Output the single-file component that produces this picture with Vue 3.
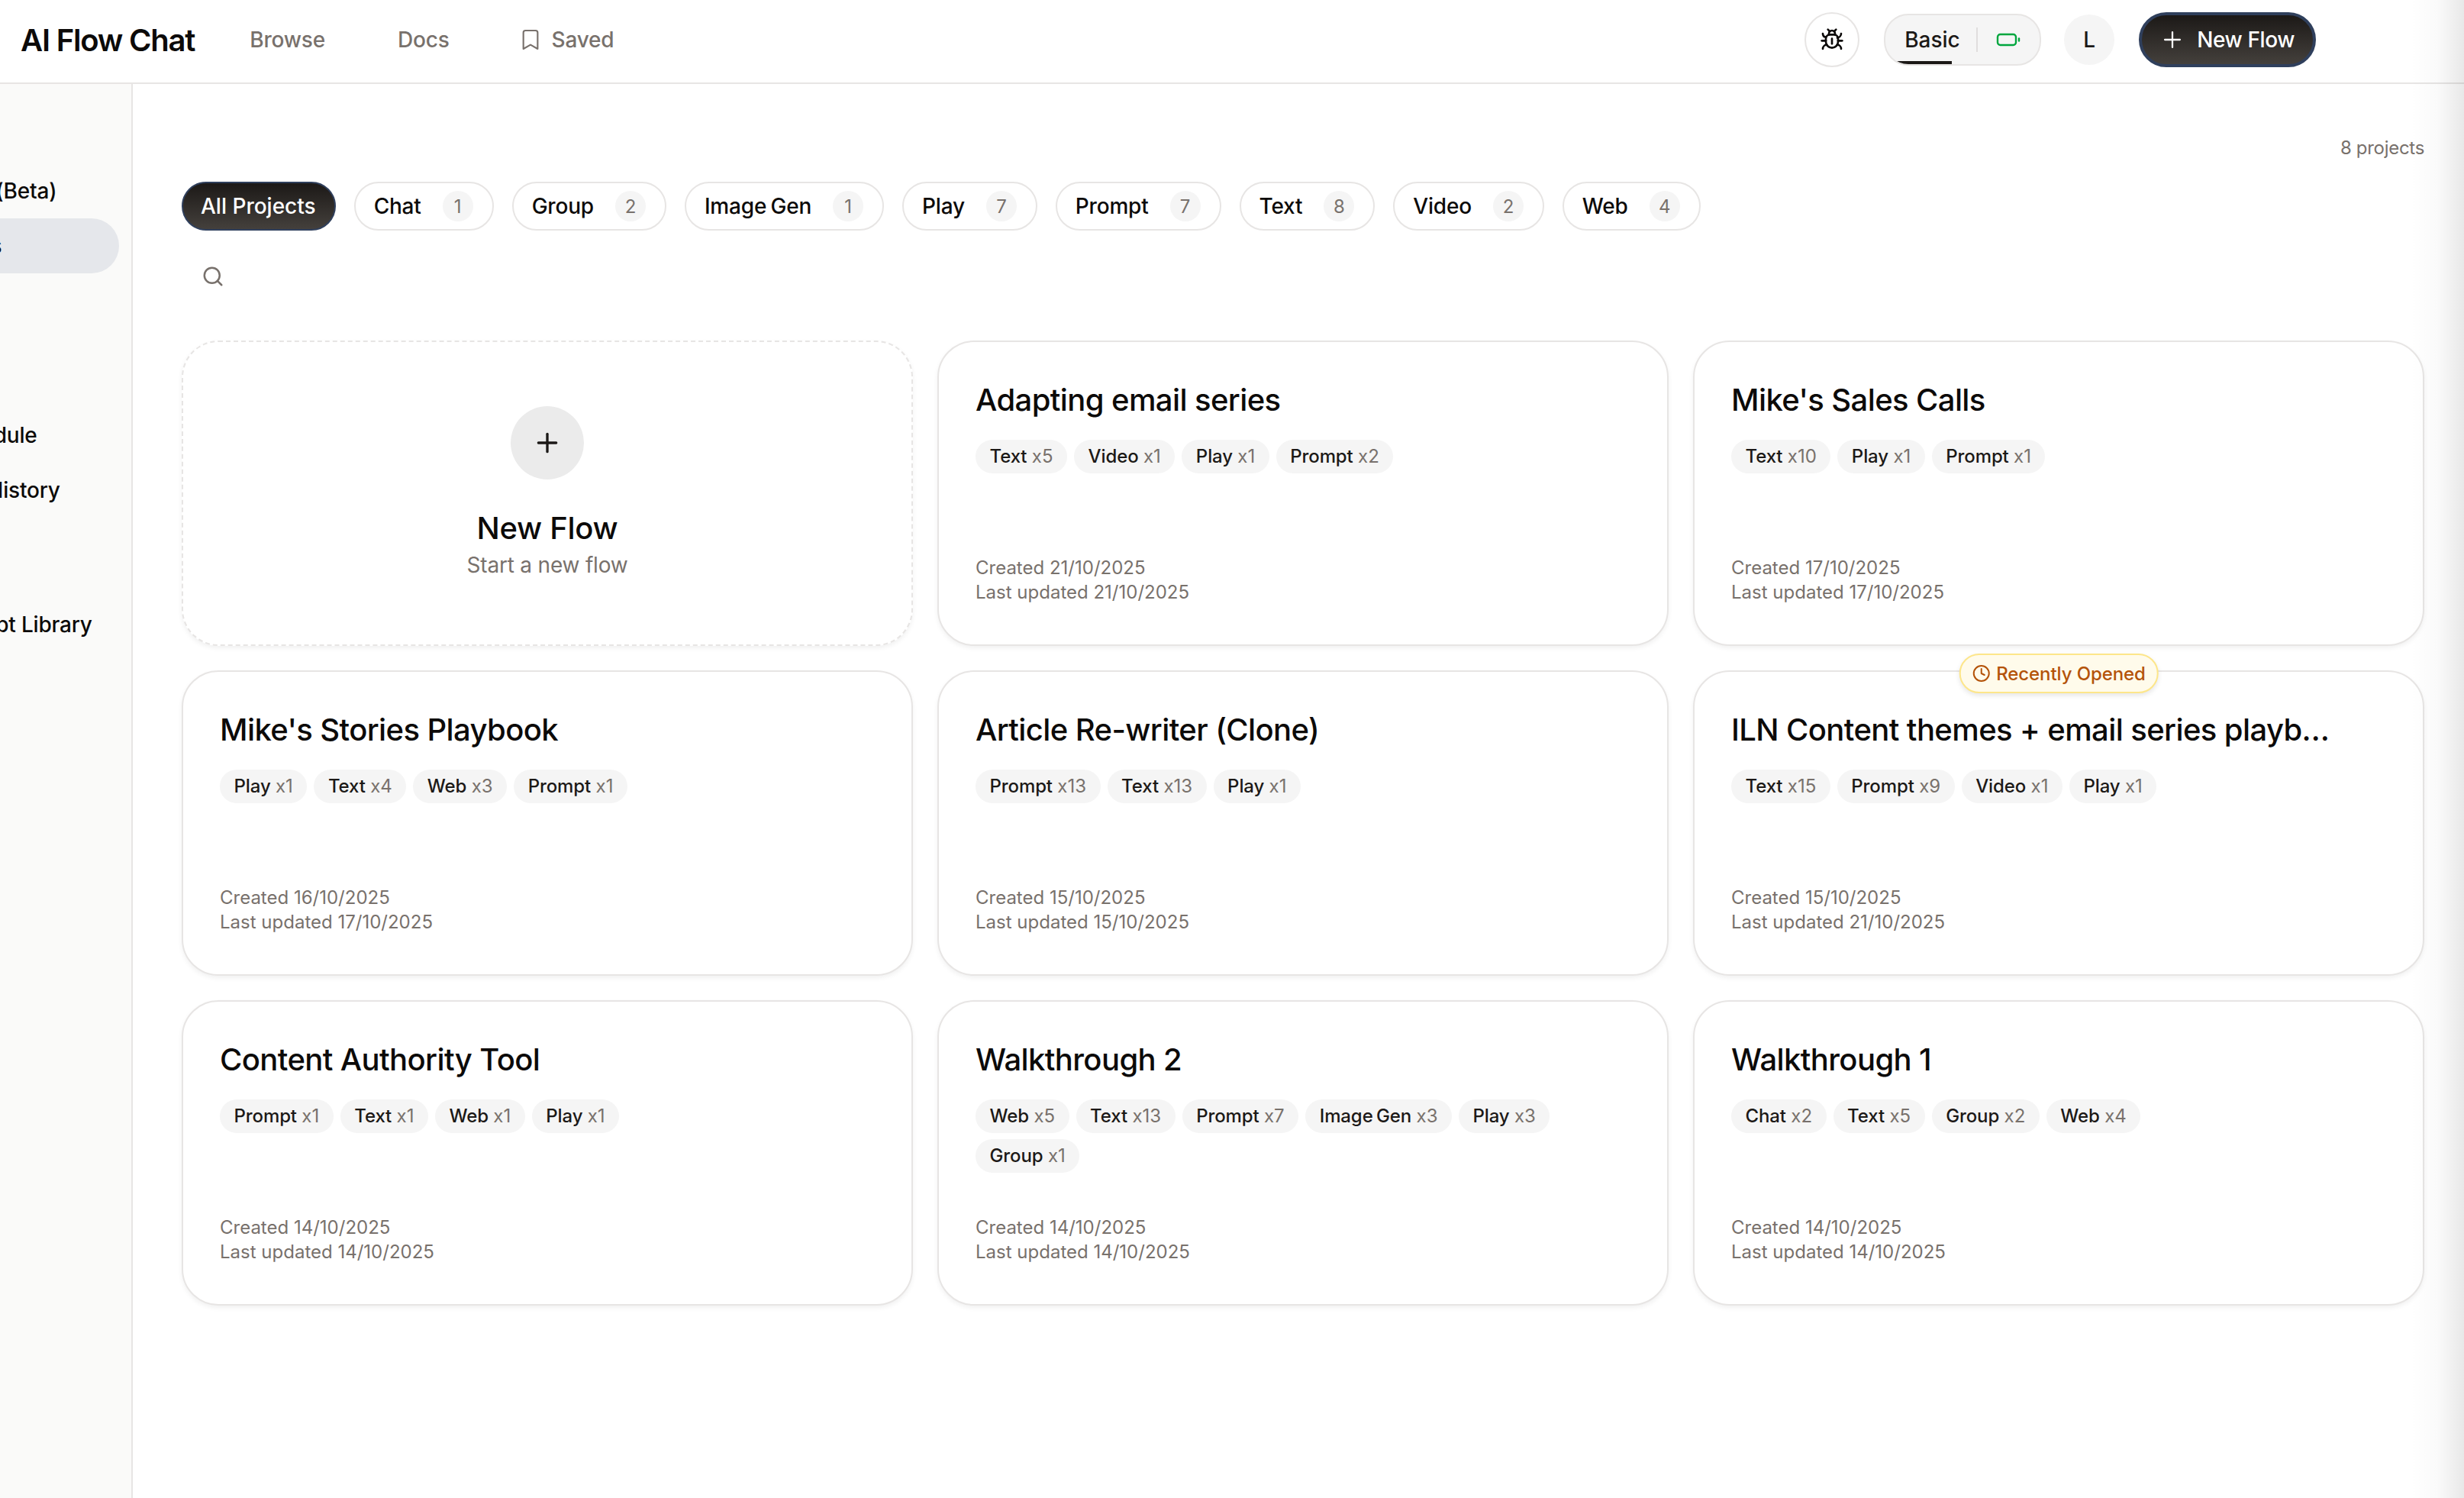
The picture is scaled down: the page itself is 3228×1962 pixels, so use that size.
<template>
  <div class="page">
    <header class="topbar">
      <div class="brand">AI Flow Chat</div>
      <nav class="topnav">
        <a>Browse</a>
        <a>Docs</a>
        <a class="saved">
          <svg width="32" height="32" viewBox="0 0 24 24" fill="none" stroke="currentColor" stroke-width="1.600" stroke-linecap="round" stroke-linejoin="round"><path d="m19 21-7-4-7 4V5a2 2 0 0 1 2-2h10a2 2 0 0 1 2 2v16z"/></svg>
          Saved
        </a>
      </nav>
      <div class="actions">
        <button class="bug-btn">
          <svg width="32" height="32" viewBox="0 0 24 24" fill="none" stroke="#0c0a09" stroke-width="2" stroke-linecap="round" stroke-linejoin="round"><path d="m8 2 1.900 1.900"/><path d="M14.100 3.900 16 2"/><path d="M9 7.100V6a3 3 0 1 1 6 0v1.100"/><path d="M12 20c-3.300 0-6-2.700-6-6v-3a4 4 0 0 1 4-4h4a4 4 0 0 1 4 4v3c0 3.300-2.700 6-6 6"/><path d="M12 11v5"/><path d="M6 9.500C4.100 9.300 3 7.900 3 6"/><path d="M6 13H2"/><path d="M3 21c0-2.100 1.700-3.900 3.800-4"/><path d="M21 6c0 2.100-1.700 3.900-3.800 4"/><path d="M22 13h-4"/><path d="M17.200 17c2.100.1 3.800 1.900 3.800 4"/></svg>
        </button>
        <div class="plan">
          <span class="plan-name">Basic</span>
          <span class="plan-sep"></span>
          <svg class="battery" width="32" height="20" viewBox="0 0 32 20" fill="none" stroke="#00a63e" stroke-width="2.400" stroke-linecap="round"><rect x="2" y="3" width="24" height="14" rx="3.500"/><path d="M30 8.500v3"/></svg>
          <span class="plan-bar"></span>
        </div>
        <div class="avatar">L</div>
        <button class="new-btn">
          <svg width="34" height="34" viewBox="0 0 24 24" fill="none" stroke="#fff" stroke-width="1.600" stroke-linecap="round"><path d="M5 12h14"/><path d="M12 5v14"/></svg>
          New Flow
        </button>
      </div>
    </header>

    <div class="body">
      <aside class="sidebar">
        <a class="item first">Chat (Beta)</a>
        <a class="item active">Flows</a>
        <a class="item gap-lg">Schedule</a>
        <a class="item">Run History</a>
        <a class="item gap-md">Prompt Library</a>
      </aside>

      <main class="content">
        <div class="count">8 projects</div>
        <div class="filters">
          <button class="pill pill-on">All Projects</button>
          <button v-for="f in filters" :key="f.name" class="pill">
            {{ f.name }}<span class="pill-num">{{ f.n }}</span>
          </button>
        </div>
        <div class="search">
          <svg width="30" height="30" viewBox="0 0 24 24" fill="none" stroke="#78716c" stroke-width="2" stroke-linecap="round" stroke-linejoin="round"><circle cx="11" cy="11" r="8"/><path d="m21 21-4.300-4.300"/></svg>
        </div>

        <div class="grid">
          <div class="card card-new">
            <div class="plus-circle">
              <svg width="40" height="40" viewBox="0 0 24 24" fill="none" stroke="#1c1917" stroke-width="2" stroke-linecap="round"><path d="M5 12h14"/><path d="M12 5v14"/></svg>
            </div>
            <div class="new-title">New Flow</div>
            <div class="new-sub">Start a new flow</div>
          </div>

          <div v-for="p in projects" :key="p.title" class="card">
            <div v-if="p.recent" class="recent">
              <svg width="24" height="24" viewBox="0 0 24 24" fill="none" stroke="#b45309" stroke-width="2" stroke-linecap="round" stroke-linejoin="round"><circle cx="12" cy="12" r="10"/><path d="M12 6v6l4 2"/></svg>
              Recently Opened
            </div>
            <div class="title">{{ p.title }}</div>
            <div class="tags">
              <span v-for="t in p.tags" :key="t[0]" class="tag"><span class="tag-name">{{ t[0] }}</span> <em>x{{ t[1] }}</em></span>
            </div>
            <div class="dates">
              <div>Created {{ p.created }}</div>
              <div>Last updated {{ p.updated }}</div>
            </div>
          </div>
        </div>
      </main>
    </div>
    <div class="edge"></div>
  </div>
</template>

<script setup>
const filters = [
  { name: 'Chat', n: 1 },
  { name: 'Group', n: 2 },
  { name: 'Image Gen', n: 1 },
  { name: 'Play', n: 7 },
  { name: 'Prompt', n: 7 },
  { name: 'Text', n: 8 },
  { name: 'Video', n: 2 },
  { name: 'Web', n: 4 }
]

const projects = [
  { title: 'Adapting email series', created: '21/10/2025', updated: '21/10/2025', tags: [['Text', 5], ['Video', 1], ['Play', 1], ['Prompt', 2]] },
  { title: "Mike's Sales Calls", created: '17/10/2025', updated: '17/10/2025', tags: [['Text', 10], ['Play', 1], ['Prompt', 1]] },
  { title: "Mike's Stories Playbook", created: '16/10/2025', updated: '17/10/2025', tags: [['Play', 1], ['Text', 4], ['Web', 3], ['Prompt', 1]] },
  { title: 'Article Re-writer (Clone)', created: '15/10/2025', updated: '15/10/2025', tags: [['Prompt', 13], ['Text', 13], ['Play', 1]] },
  { title: 'ILN Content themes + email series playbook', recent: true, created: '15/10/2025', updated: '21/10/2025', tags: [['Text', 15], ['Prompt', 9], ['Video', 1], ['Play', 1]] },
  { title: 'Content Authority Tool', created: '14/10/2025', updated: '14/10/2025', tags: [['Prompt', 1], ['Text', 1], ['Web', 1], ['Play', 1]] },
  { title: 'Walkthrough 2', created: '14/10/2025', updated: '14/10/2025', tags: [['Web', 5], ['Text', 13], ['Prompt', 7], ['Image Gen', 3], ['Play', 3], ['Group', 1]] },
  { title: 'Walkthrough 1', created: '14/10/2025', updated: '14/10/2025', tags: [['Chat', 2], ['Text', 5], ['Group', 2], ['Web', 4]] }
]
</script>

<style scoped>
.page {
  position: relative;
  height: 1962px;
  overflow: hidden;
  background: #fff;
  color: #0c0a09;
  font-family: Inter, "Liberation Sans", sans-serif;
}
button {
  font-family: inherit;
  cursor: pointer;
}
.topbar {
  display: flex;
  align-items: center;
  height: 110px;
  padding: 0 194px 4px 27px;
  box-sizing: border-box;
  border-bottom: 2px solid #e7e5e4;
}
.brand {
  font-size: 40px;
  font-weight: 600;
  letter-spacing: -1.200px;
}
.topnav {
  display: flex;
  align-items: center;
  gap: 95px;
  margin-left: 72px;
  font-size: 28px;
  font-weight: 500;
  letter-spacing: -0.200px;
  color: #78716c;
}
.saved {
  display: flex;
  align-items: center;
  gap: 12px;
  margin-left: -5px;
}
.actions {
  display: flex;
  align-items: center;
  margin-left: auto;
}
.bug-btn {
  display: flex;
  align-items: center;
  justify-content: center;
  width: 72px;
  height: 72px;
  padding: 0;
  background: #fff;
  border: 2px solid #e7e5e4;
  border-radius: 50%;
}
.plan {
  position: relative;
  display: flex;
  align-items: center;
  width: 202px;
  height: 64px;
  margin-left: 32px;
  overflow: hidden;
  background: #f5f5f5;
  border: 2px solid #e7e5e4;
  border-radius: 32px;
}
.plan-name {
  margin-left: 25px;
  font-size: 28px;
  font-weight: 500;
  color: #1c1917;
}
.plan-sep {
  width: 2px;
  height: 32px;
  margin: 0 24px 0 21px;
  background: #e0dedd;
}
.plan-bar {
  position: absolute;
  left: 12px;
  bottom: 0;
  width: 75px;
  height: 4px;
  background: #1c1917;
}
.avatar {
  display: flex;
  align-items: center;
  justify-content: center;
  width: 66px;
  height: 66px;
  margin-left: 30px;
  font-size: 28px;
  font-weight: 500;
  color: #1c1917;
  background: #f5f5f5;
  border-radius: 50%;
}
.new-btn {
  display: flex;
  align-items: center;
  gap: 15px;
  height: 72px;
  margin-left: 32px;
  padding: 0 24px 0 23px;
  font-size: 28px;
  font-weight: 500;
  letter-spacing: -0.400px;
  color: #fff;
  background: linear-gradient(#1c1917, #44403c);
  border: 4px solid #2f3f5c;
  border-radius: 36px;
}
.body {
  display: flex;
  height: 1852px;
}
.sidebar {
  flex: none;
  width: 172px;
  overflow: hidden;
  background: #fafaf9;
  border-right: 2px solid #e7e5e4;
}
/* the rail is scrolled off to the left, only the end of each label shows */
.item {
  display: flex;
  align-items: center;
  width: 300px;
  height: 72px;
  margin-left: -144px;
  padding-left: 69px;
  font-size: 28px;
  font-weight: 500;
  letter-spacing: -0.200px;
  white-space: nowrap;
  box-sizing: border-box;
  border-radius: 36px;
}
.first {
  margin-top: 104px;
}
.active {
  background: #e5e7eb;
}
.gap-lg {
  margin-top: 176px;
}
.gap-md {
  margin-top: 104px;
}
.content {
  flex: 1;
  min-width: 0;
  padding: 0 52px 0 64px;
}
.count {
  margin-top: 68px;
  font-size: 24px;
  line-height: 32px;
  letter-spacing: -0.300px;
  text-align: right;
  color: #78716c;
}
.filters {
  display: flex;
  gap: 24px;
  margin-top: 28px;
}
.pill {
  display: flex;
  align-items: center;
  height: 64px;
  padding: 0 25px 0 24px;
  font-size: 28px;
  font-weight: 500;
  letter-spacing: -0.200px;
  word-spacing: -2px;
  color: #0c0a09;
  background: #fff;
  border: 2px solid #e7e5e4;
  border-radius: 32px;
}
.pill-on {
  padding: 0 24px 0 23px;
  letter-spacing: 0;
  word-spacing: 0;
  color: #fff;
  background: linear-gradient(#1c1917, #44403c);
  border-color: #2f3f5c;
}
.pill-num {
  display: flex;
  align-items: center;
  justify-content: center;
  width: 40px;
  height: 40px;
  margin-left: 28px;
  font-size: 24px;
  font-weight: 400;
  color: #78716c;
  background: #f5f5f5;
  border-radius: 50%;
}
.search {
  display: flex;
  align-items: center;
  height: 120px;
  padding-left: 26px;
}
.grid {
  display: grid;
  grid-template-columns: repeat(3, 1fr);
  grid-auto-rows: 400px;
  gap: 32px;
  margin-top: 24px;
}
.card {
  position: relative;
  display: flex;
  flex-direction: column;
  min-width: 0;
  padding: 48px 48px 52px;
  box-sizing: border-box;
  background: #fff;
  border: 2px solid #e7e5e4;
  border-radius: 48px;
  box-shadow: 0 3px 6px rgba(0, 0, 0, 0.06);
}
.card-new {
  align-items: center;
  padding: 84px 0 0;
  border-style: dashed;
}
.plus-circle {
  display: flex;
  align-items: center;
  justify-content: center;
  width: 96px;
  height: 96px;
  background: #ebebeb;
  border-radius: 50%;
}
.new-title {
  margin-top: 36px;
  font-size: 40px;
  line-height: 56px;
  font-weight: 500;
  letter-spacing: -0.300px;
}
.new-sub {
  margin-top: 2px;
  font-size: 28px;
  line-height: 36px;
  letter-spacing: -0.200px;
  color: #78716c;
}
.title {
  max-width: 795px;
  overflow: hidden;
  font-size: 40px;
  line-height: 56px;
  font-weight: 500;
  letter-spacing: -0.600px;
  white-space: nowrap;
  text-overflow: ellipsis;
}
.tags {
  display: flex;
  flex-wrap: wrap;
  gap: 8px 9px;
  margin-top: 24px;
}
.tag {
  display: block;
  height: 44px;
  padding: 0 18.500px;
  font-size: 24px;
  line-height: 44px;
  font-weight: 500;
  color: #1c1917;
  background: #f5f5f5;
  border-radius: 22px;
}
.tag-name {
  letter-spacing: -0.100px;
  word-spacing: -2px;
}
.tag em {
  font-style: normal;
  font-weight: 400;
  color: #78716c;
}
.dates {
  margin-top: auto;
  font-size: 24px;
  line-height: 32px;
  color: #78716c;
}
.recent {
  position: absolute;
  top: -24px;
  left: 50%;
  display: flex;
  align-items: center;
  gap: 8px;
  height: 52px;
  padding: 0 14.500px;
  box-sizing: border-box;
  font-size: 24px;
  font-weight: 500;
  letter-spacing: -0.100px;
  white-space: nowrap;
  color: #b45309;
  background: #fffbeb;
  border: 2px solid #fde68a;
  border-radius: 26px;
  box-shadow: 0 3px 6px rgba(0, 0, 0, 0.1);
  transform: translateX(-50%);
}
.edge {
  position: absolute;
  top: 0;
  right: 0;
  bottom: 0;
  width: 70px;
  background: linear-gradient(to right, rgba(0, 0, 0, 0), rgba(0, 0, 0, 0.02) 50%, rgba(0, 0, 0, 0.09));
  pointer-events: none;
}
</style>
